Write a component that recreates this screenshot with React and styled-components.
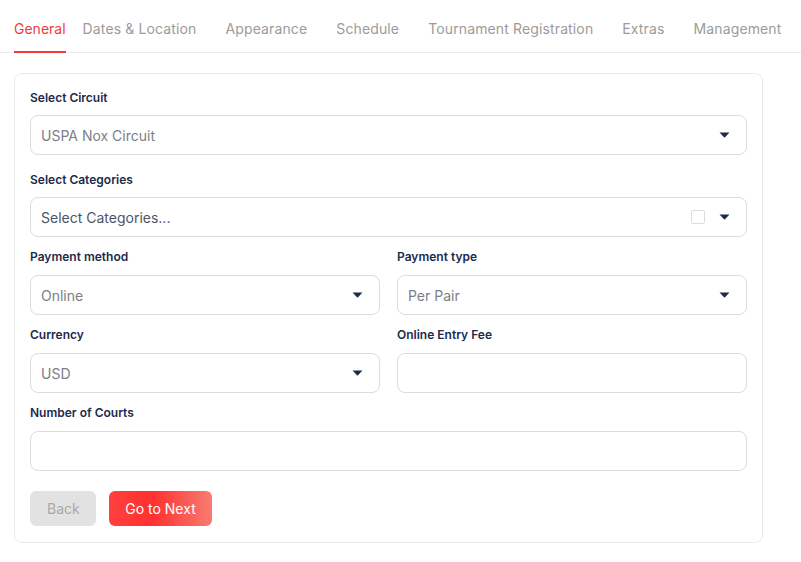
import React from "react";
import styled, { createGlobalStyle } from "styled-components";

const Global = createGlobalStyle`
  * { box-sizing: border-box; }
  body { margin: 0; background: #ffffff; font-family: Inter, "Noto Sans", sans-serif; }
`;

const Page = styled.div`
  width: 801px;
  padding-top: 18px;
`;

const TabBar = styled.div`
  display: flex;
  align-items: flex-end;
  gap: 29px;
  padding: 0 14px;
  border-bottom: 1px solid #ebebeb;
  height: 35px;
`;

const Tab = styled.div`
  position: relative;
  font-size: 14px;
  line-height: 20px;
  letter-spacing: ${(p) => (p.$active ? "0" : "0.13px")};
  padding-bottom: 13px;
  white-space: nowrap;
  color: ${(p) => (p.$active ? "#f23b3b" : "#9b9b9b")};
  margin-right: ${(p) => (p.$active ? "-12px" : "0")};
  &::after {
    content: "";
    display: ${(p) => (p.$active ? "block" : "none")};
    position: absolute;
    left: 0;
    right: 0;
    bottom: -1px;
    height: 2px;
    background: #f23b3b;
  }
`;

const Card = styled.div`
  margin: 20px 0 0 14px;
  width: 749px;
  border: 1px solid #e6eaf0;
  border-radius: 8px;
  padding: 16px 15px 16px 15px;
`;

const Field = styled.div`
  display: flex;
  flex-direction: column;
  margin-bottom: ${(p) => p.$mb || "0px"};
`;

const Label = styled.label`
  font-size: 12px;
  line-height: 16px;
  font-weight: 600;
  color: #1c2a4b;
  margin-bottom: ${(p) => p.$gap || "9px"};
`;

const Box = styled.div`
  height: 40px;
  border: 1px solid #dcdcdc;
  border-radius: 8px;
  display: flex;
  align-items: center;
  padding: 0 16px 0 10px;
  font-size: 14px;
  color: ${(p) => (p.$dark ? "#4b5563" : "#7b7f86")};
`;

const Value = styled.span`
  flex: 1;
`;

const Check = styled.span`
  width: 14px;
  height: 14px;
  border: 1px solid #d9dde3;
  border-radius: 2px;
  margin-right: 14px;
`;

const Grid = styled.div`
  display: grid;
  grid-template-columns: 1fr 1fr;
  column-gap: 17px;
  row-gap: 12px;
  margin-bottom: 12px;
`;

const Actions = styled.div`
  display: flex;
  gap: 13px;
  margin-top: 20px;
`;

const Button = styled.button`
  height: 35px;
  border-radius: 6px;
  padding: 0 16px;
  font-family: Inter, sans-serif;
  font-size: 14px;
  border: ${(p) => (p.$primary ? "none" : "1px solid #e3e3e3")};
  background: ${(p) =>
    p.$primary
      ? "linear-gradient(90deg, #ff4040 0%, #ff3030 42%, #f87c72 100%)"
      : "#e2e2e2"};
  color: ${(p) => (p.$primary ? "#ffffff" : "#a9a9a9")};
  width: ${(p) => p.$w};
`;

const Caret = () => (
  <svg width="11" height="6" viewBox="0 0 11 6">
    <path d="M0.5 0.5 H10.5 L6 5.2 Q5.5 5.7 5 5.2 Z" fill="#1c2a4b" />
  </svg>
);

const Select = ({ value, check }) => (
  <Box>
    <Value>{value}</Value>
    {check && <Check />}
    <Caret />
  </Box>
);

export default function App() {
  const tabs = [
    "General",
    "Dates & Location",
    "Appearance",
    "Schedule",
    "Tournament Registration",
    "Extras",
    "Management",
  ];
  return (
    <>
      <Global />
      <Page>
        <TabBar>
          {tabs.map((t, i) => (
            <Tab key={t} $active={i === 0}>
              {t}
            </Tab>
          ))}
        </TabBar>
        <Card>
          <Field $mb="17px">
            <Label>Select Circuit</Label>
            <Select value="USPA Nox Circuit" />
          </Field>
          <Field $mb="12px">
            <Label>Select Categories</Label>
            <Box $dark>
              <Value>Select Categories...</Value>
              <Check />
              <Caret />
            </Box>
          </Field>
          <Grid>
            <Field>
              <Label $gap="10px">Payment method</Label>
              <Select value="Online" />
            </Field>
            <Field>
              <Label $gap="10px">Payment type</Label>
              <Select value="Per Pair" />
            </Field>
            <Field>
              <Label $gap="10px">Currency</Label>
              <Select value="USD" />
            </Field>
            <Field>
              <Label $gap="10px">Online Entry Fee</Label>
              <Box />
            </Field>
          </Grid>
          <Field>
            <Label $gap="10px">Number of Courts</Label>
            <Box />
          </Field>
          <Actions>
            <Button $w="66px">Back</Button>
            <Button $primary $w="103px">Go to Next</Button>
          </Actions>
        </Card>
      </Page>
    </>
  );
}
